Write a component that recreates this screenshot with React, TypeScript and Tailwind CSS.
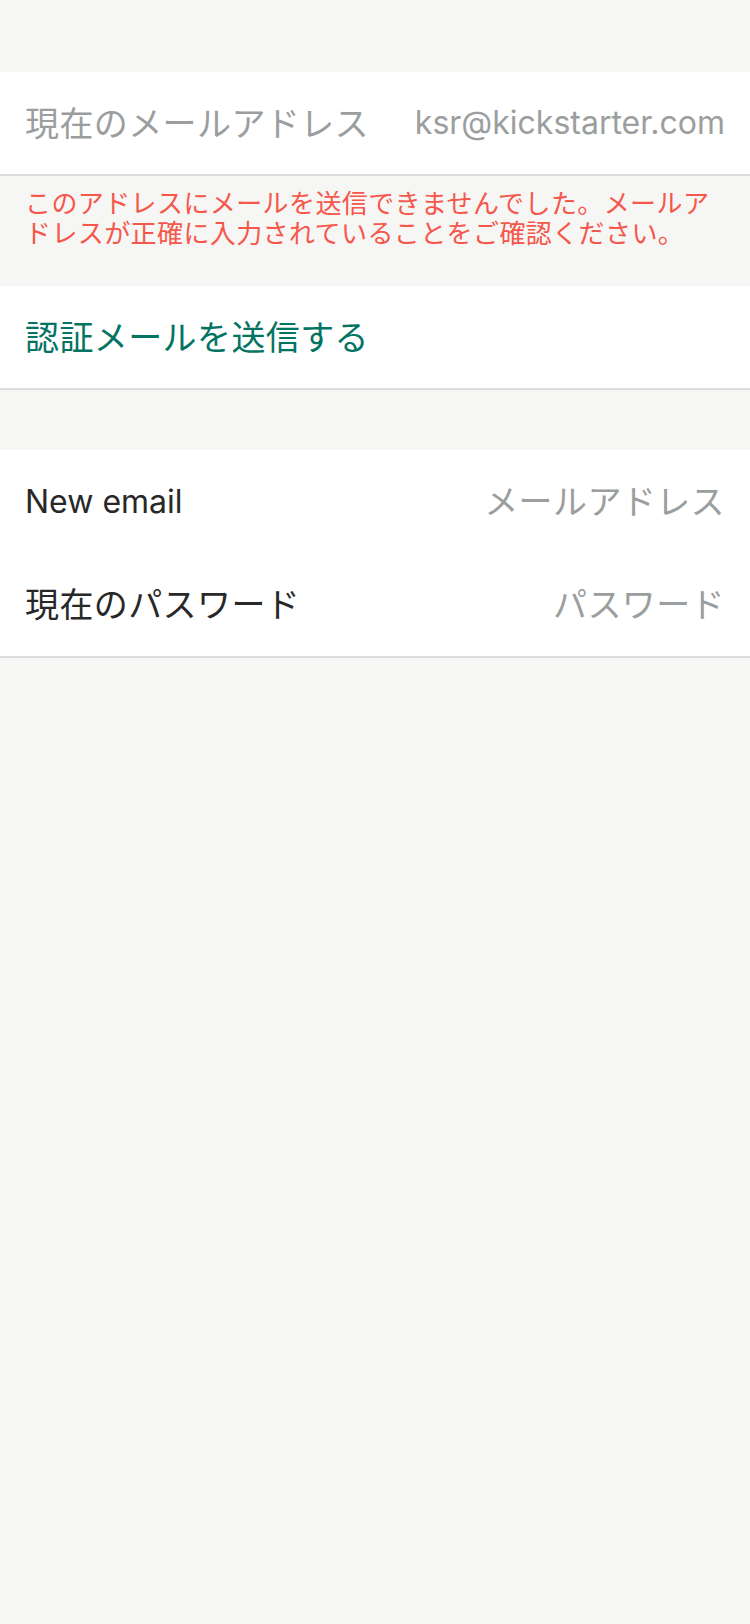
const font = { fontFamily: 'Inter, "Noto Sans CJK JP", sans-serif' };

function Row({ label, value, latin }: { label: string; value: string; latin?: boolean }) {
  return (
    <div className="flex h-[103px] items-center justify-between px-[25px]">
      <span
        className={`${latin ? "text-[32px]" : "text-[34px] tracking-[0.4px]"} text-[#282828]`}
      >
        {label}
      </span>
      <span className="text-[34px] tracking-[0.4px] text-[#9b9e9e]">{value}</span>
    </div>
  );
}

export default function App() {
  return (
    <div className="min-h-[1624px] w-[750px] bg-[#f6f6f4]" style={font}>
      <div className="h-[72px]" />

      <div className="flex h-[104px] items-center justify-between border-b-2 border-[#dcdcdc] bg-white px-[25px]">
        <span className="text-[34px] tracking-[0.4px] text-[#9b9e9e]">現在のメールアドレス</span>
        <span className="text-[32px] text-[#9b9e9e]">ksr@kickstarter.com</span>
      </div>

      <div className="h-[110px] px-[25px] pt-[13px]">
        <p className="text-[26px] leading-[30px] tracking-[0.4px] text-[#f5574a]">
          このアドレスにメールを送信できませんでした。メールアドレスが正確に入力されていることをご確認ください。
        </p>
      </div>

      <div className="flex h-[104px] items-center border-b-2 border-[#dcdcdc] bg-white px-[25px]">
        <span className="text-[34px] tracking-[0.4px] text-[#037362]">認証メールを送信する</span>
      </div>

      <div className="h-[60px]" />

      <div className="border-b-2 border-[#dcdcdc] bg-white">
        <Row label="New email" value="メールアドレス" latin />
        <Row label="現在のパスワード" value="パスワード" />
      </div>
    </div>
  );
}
